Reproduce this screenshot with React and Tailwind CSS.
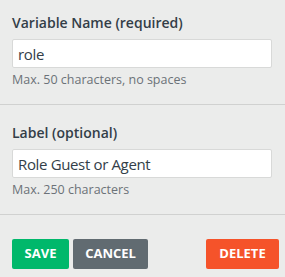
export default function App() {
  return (
    <div className="w-[285px] h-[277px] bg-[#ebeceb] font-['Open_Sans',sans-serif] text-[#333e48]">
      <div className="px-3 pt-[13px] pb-[16px]">
        <label className="block text-[14px] font-semibold leading-[19px] text-[#333e48]">
          Variable Name (required)
        </label>
        <input
          className="mt-[7px] block w-[260px] h-[29px] bg-white border border-[#d8d9d8] rounded-[2px] px-[5px] text-[15px] tracking-[-0.35px] text-[#333e48] outline-none"
          defaultValue="role"
        />
        <p className="mt-[3px] text-[12.5px] leading-[17px] text-[#6b7278]">
          Max. 50 characters, no spaces
        </p>
      </div>
      <div className="border-t border-[#d0d1d0]" />
      <div className="px-3 pt-[18px] pb-[16px]">
        <label className="block text-[14px] font-semibold leading-[19px] text-[#333e48]">
          Label (optional)
        </label>
        <input
          className="mt-[7px] block w-[260px] h-[29px] bg-white border border-[#d8d9d8] rounded-[2px] px-[5px] text-[15px] tracking-[-0.35px] text-[#333e48] outline-none"
          defaultValue="Role Guest or Agent"
        />
        <p className="mt-[3px] text-[12.5px] leading-[17px] text-[#6b7278]">
          Max. 250 characters
        </p>
      </div>
      <div className="border-t border-[#d0d1d0]" />
      <div className="flex items-center pl-3 pr-[6px] pt-[24px]">
        <button className="h-[30px] w-[57px] rounded-[2px] bg-[#00b86b] text-white text-[13px] font-bold">
          SAVE
        </button>
        <button className="ml-[4px] h-[30px] w-[75px] rounded-[2px] bg-[#616b71] text-white text-[13px] font-bold">
          CANCEL
        </button>
        <button className="ml-auto h-[30px] w-[73px] rounded-[2px] bg-[#f5532a] text-white text-[13px] font-bold">
          DELETE
        </button>
      </div>
    </div>
  );
}
